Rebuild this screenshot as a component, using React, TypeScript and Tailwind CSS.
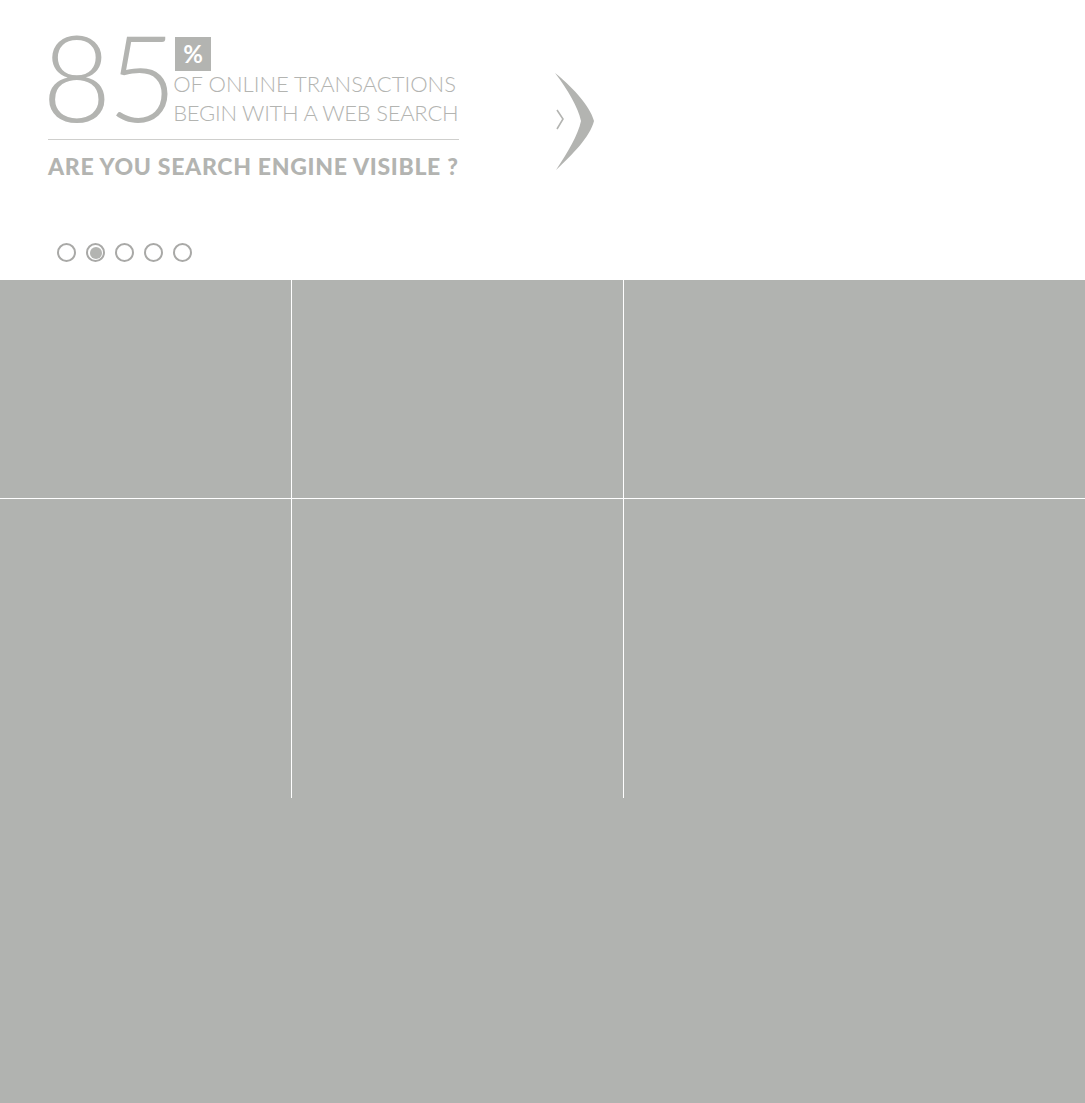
import { useState } from "react";

const grey = "text-[#b3b4b1]";

function NextArrow() {
  return (
    <svg width="50" height="105" viewBox="0 0 50 105" className="block">
      <path
        d="M5 3 C 20 15, 40 35, 44 51 C 40 67, 22 85, 6 100 C 18 82, 28 65, 31 51 C 28 37, 18 20, 5 3 Z"
        fill="#b3b4b1"
      />
      <path d="M7 40 L13 49 L7 59" fill="none" stroke="#b3b4b1" strokeWidth="1.6" />
    </svg>
  );
}

function Dots() {
  const [active, setActive] = useState(1);
  return (
    <div className="flex gap-[10px]">
      {[0, 1, 2, 3, 4].map((i) => (
        <button
          key={i}
          onClick={() => setActive(i)}
          className="w-[19px] h-[19px] rounded-full border-2 border-[#a9a9a7] flex items-center justify-center bg-white"
        >
          {active === i && <span className="w-[12px] h-[12px] rounded-full bg-[#b3b4b1]" />}
        </button>
      ))}
    </div>
  );
}

export default function App() {
  return (
    <div className="w-full min-h-[1103px] bg-[#b1b3b0] font-['Lato','Liberation_Sans',sans-serif]">
      <header className="h-[280px] bg-white flex flex-col">
        <div className="flex pl-[48px] pt-[30px]">
          <div className="w-[411px]">
            <div className="flex items-end h-[100px]">
              <span className={`${grey} text-[120px] leading-none font-light tracking-[-4px] -ml-[6px] -mb-[6px]`}>85</span>
              <div className="flex flex-col pb-[3px]">
                <span className="ml-[2px] w-[36px] h-[34px] bg-[#b3b4b1] text-white text-[24px] leading-[34px] text-center font-bold -mb-[2px]">
                  %
                </span>
                <span className={`${grey} text-[22px] leading-[29px] font-light whitespace-nowrap`}>
                  OF ONLINE TRANSACTIONS
                </span>
                <span className={`${grey} text-[22px] leading-[29px] font-light tracking-[-0.25px] whitespace-nowrap`}>
                  BEGIN WITH A WEB SEARCH
                </span>
              </div>
            </div>
            <div className="h-px bg-[#cfcfcd] mt-[9px]" />
            <h2 className={`${grey} text-[23px] leading-none font-black tracking-[0.7px] mt-[15px] whitespace-nowrap`}>
              ARE YOU SEARCH ENGINE VISIBLE ?
            </h2>
          </div>
          <div className="ml-[91px] mt-[40px]">
            <NextArrow />
          </div>
        </div>
        <div className="pl-[57px] mt-[65px]">
          <Dots />
        </div>
      </header>

      <section className="flex flex-col">
        <div className="flex h-[219px] border-b border-white">
          <div className="w-[292px] border-r border-white" />
          <div className="w-[332px] border-r border-white" />
          <div className="flex-1" />
        </div>
        <div className="flex h-[299px]">
          <div className="w-[292px] border-r border-white" />
          <div className="w-[332px] border-r border-white" />
          <div className="flex-1" />
        </div>
      </section>
    </div>
  );
}
